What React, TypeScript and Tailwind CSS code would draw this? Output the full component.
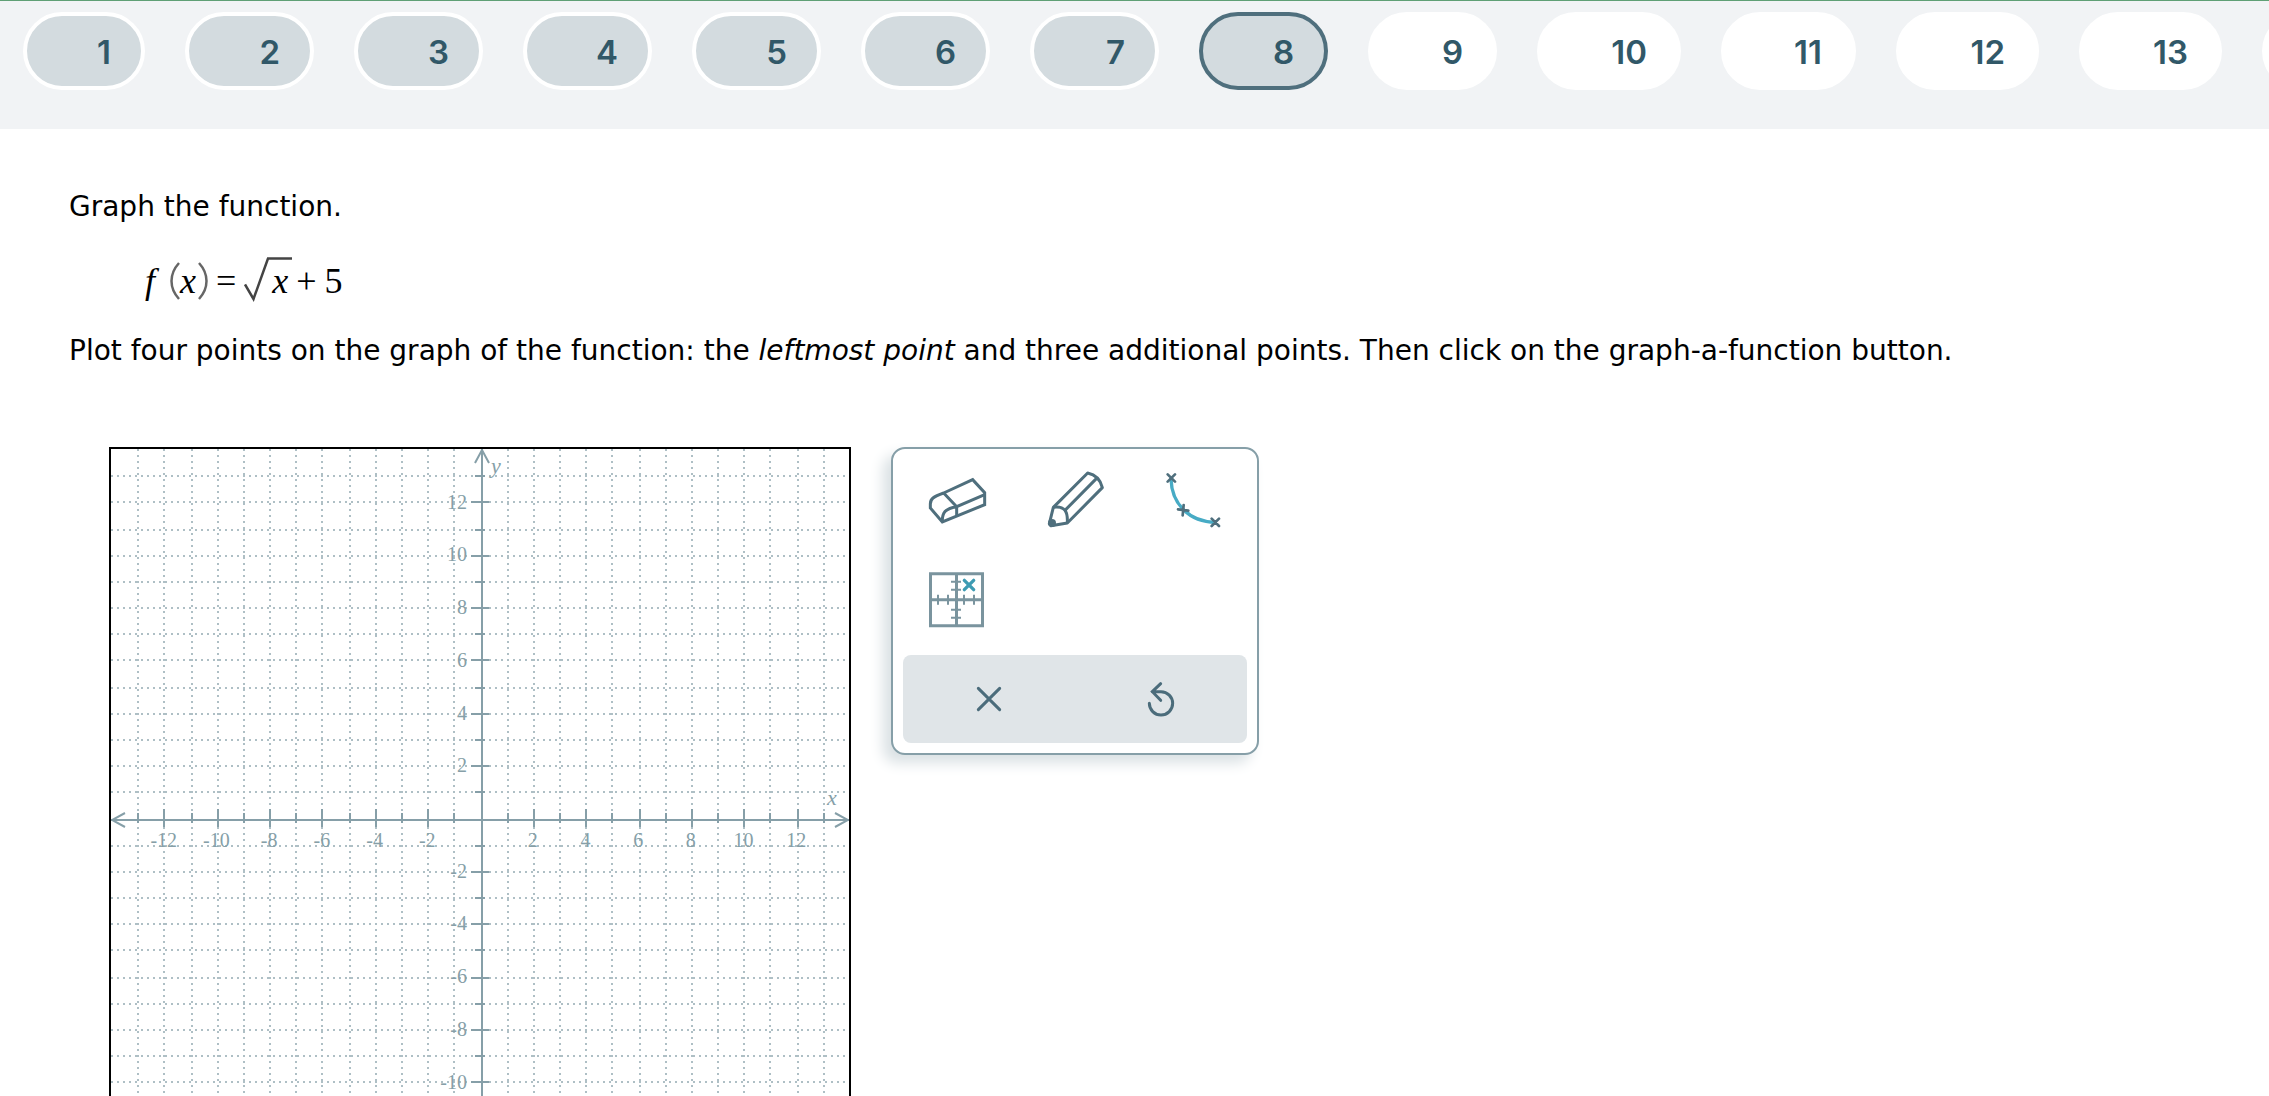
import clsx from "clsx"

const questions = [
    { label: "1", width: "w-[122px]" },
    { label: "2", width: "w-[129px]" },
    { label: "3", width: "w-[129px]" },
    { label: "4", width: "w-[129px]" },
    { label: "5", width: "w-[129px]" },
    { label: "6", width: "w-[129px]" },
    { label: "7", width: "w-[129px]" },
    { label: "8", width: "w-[129px]" },
    { label: "9", width: "w-[129px]" },
    { label: "10", width: "w-[144px]" },
    { label: "11", width: "w-[135px]" },
    { label: "12", width: "w-[143px]" },
    { label: "13", width: "w-[143px]" },
]

const CURRENT = 8
const GRID_SIZE = 369
const UNITS = 14

const place = (unit: number) => ((unit + UNITS) * GRID_SIZE) / (UNITS * 2)
// grid lines sit on whole pixels
const toPx = (unit: number) => Math.round(place(unit))

const lines = Array.from({ length: UNITS * 2 - 1 }, (_, i) => i - UNITS + 1).filter((n) => n !== 0)
const labels = lines.filter((n) => n % 2 === 0)

function QuestionNav() {
    return (
        <nav className="border-t border-[#5f9f75] bg-[#f1f3f5] overflow-hidden pt-[11px] pb-[39px] pl-[23px]">
            <ol className="flex gap-10">
                {questions.map((q) => {
                    const n = Number(q.label)
                    return (
                        <li key={q.label} className="shrink-0">
                            <button
                                type="button"
                                aria-current={n === CURRENT ? "step" : undefined}
                                className={clsx(
                                    "flex h-[78px] items-center justify-end rounded-full border-4 pt-[2px] pr-[30px] font-['Inter',sans-serif] text-[33px] leading-10 font-semibold text-[#315868]",
                                    q.width,
                                    n <= CURRENT ? "bg-[#d3dbdf]" : "bg-white",
                                    n === CURRENT ? "border-[#4f6f7d]" : "border-white"
                                )}
                            >
                                {q.label}
                            </button>
                        </li>
                    )
                })}
                <li className="shrink-0">
                    <button type="button" aria-label="More questions" className="block h-[78px] w-[143px] rounded-full bg-white" />
                </li>
            </ol>
        </nav>
    )
}

function Formula() {
    return (
        <div className="mt-[34px] mb-[30px] ml-[76px] flex h-10 items-center font-['Liberation_Serif',serif] text-[36px] leading-10 text-black">
            <i>f</i>
            <svg className="ml-[15px] h-[38px] w-[10px]" viewBox="0 0 10 38" fill="none" stroke="#666" strokeWidth="2.5">
                <path d="M9 1C-1 12 -1 26 9 37" />
            </svg>
            <i>x</i>
            <svg className="ml-[2px] h-[38px] w-[10px]" viewBox="0 0 10 38" fill="none" stroke="#666" strokeWidth="2.5">
                <path d="M1 1C11 12 11 26 1 37" />
            </svg>
            <span className="ml-2">=</span>
            <svg className="ml-2 h-12 w-12" viewBox="0 0 48 48" fill="none" stroke="#444" strokeWidth="2.5">
                <path d="M1 27.5L9.500 42L24 1.500H48" />
            </svg>
            <i className="-ml-[20px]">x</i>
            <span className="ml-2">+</span>
            <span className="ml-2">5</span>
        </div>
    )
}

function Graph() {
    const axis = toPx(0) + 0.5
    return (
        <div className="shrink-0 border-2 border-black">
            <svg
                className="size-[738px]"
                viewBox={`0 0 ${GRID_SIZE} ${GRID_SIZE}`}
                role="img"
                aria-label="Coordinate grid"
                fill="none"
            >
                <g stroke="#aebfc5" strokeDasharray="1 2">
                    {lines.map((n) => {
                        const p = toPx(n) + 0.5
                        return <path key={n} d={`M${p} 0V${GRID_SIZE}M0 ${p}H${GRID_SIZE}`} />
                    })}
                </g>
                <g stroke="#869fa8">
                    <path d={`M${axis} 0V${GRID_SIZE}M0 ${axis}H${GRID_SIZE}`} />
                    {lines.map((n) => {
                        const p = toPx(n) + 0.5
                        return n % 2 === 0 ? (
                            <path key={n} d={`M${p} 180V189M180 ${p}H189`} />
                        ) : (
                            <path key={n} d={`M${p} 182V187M182 ${p}H187`} />
                        )
                    })}
                    <path d="M182 7L185.500 0.500L189 7M7 182L0.500 185.500L7 189M362 182L368.500 185.500L362 189" />
                </g>
                <g fill="#869fa8" className="font-['Liberation_Serif',serif] text-[10px]">
                    {labels.map((n) => (
                        <text key={n} x={place(n)} y="199" textAnchor="middle">
                            {n}
                        </text>
                    ))}
                    {labels.map((n) => (
                        <text key={n} x="178" y={place(-n) + 3.5} textAnchor="end">
                            {n}
                        </text>
                    ))}
                    <text x="190" y="12" className="text-[11px] italic">y</text>
                    <text x="358" y="178" className="text-[11px] italic">x</text>
                </g>
            </svg>
        </div>
    )
}

function EraserIcon() {
    return (
        <svg className="size-[60px]" viewBox="0 0 180 180" fill="none" stroke="#4f6f7d" strokeWidth="9">
            <path d="M50 66L137 26L173 65V101L46 153L10 111V99C10 84 18 77 50 66Z" />
            <path d="M50 66L89 107L173 71M89 107V134M46 153C45 126 54 112 89 107" />
        </svg>
    )
}

function PencilIcon() {
    return (
        <svg className="size-[60px]" viewBox="0 0 180 180" fill="none" stroke="#4f6f7d" strokeWidth="9">
            <path d="M25 109L128 6C152 11 166 24 172 50L67 156L18 164L13 158Z" strokeLinejoin="round" />
            <path d="M25 109C44 106 54 111 60 118C66 126 68 138 67 156M60 118L157 20" />
            <circle cx="21" cy="156" r="12" fill="#4f6f7d" stroke="none" />
        </svg>
    )
}

function CurveIcon() {
    return (
        <svg className="size-[60px]" viewBox="0 0 180 180" fill="none" strokeLinecap="round">
            <path d="M24 24C26 100 80 153 157 154" stroke="#47abc5" strokeWidth="10" />
            <path
                d="M14 10L36 32M36 10L14 32M62 102L59 133M45 115L76 119M146 143L168 165M168 143L146 165"
                stroke="#4f6f7d"
                strokeWidth="8"
            />
        </svg>
    )
}

function PlotIcon() {
    return (
        <svg className="size-[60px]" viewBox="0 0 180 180" fill="none" stroke="#7a949e">
            <path d="M10.500 14H166.500V170H10.500ZM88.500 14V170M10.500 92H166.500" strokeWidth="9" />
            <path
                d="M72 38H102M72 62H102M72 122H102M72 146H102M33 77V107M63 77V107M111 77V107M141 77V107"
                strokeWidth="6"
            />
            <path d="M112 34L140 62M140 34L112 62" stroke="#3d9bb3" strokeWidth="10" strokeLinecap="round" />
        </svg>
    )
}

function ToolPanel() {
    const tool = "flex h-[98px] items-center justify-center"
    const action = "flex items-center justify-center"
    return (
        <div className="w-[368px] shrink-0 rounded-[14px] border-2 border-[#869fa8] bg-white shadow-[-8px_8px_14px_#dae1e4]">
            <div className="grid grid-cols-3 px-[5px] pt-[3px]">
                <button type="button" aria-label="Eraser" className={tool}>
                    <EraserIcon />
                </button>
                <button type="button" aria-label="Pencil" className={tool}>
                    <PencilIcon />
                </button>
                <button type="button" aria-label="Graph a function" className={tool}>
                    <CurveIcon />
                </button>
                <button type="button" aria-label="Plot a point" className={tool}>
                    <PlotIcon />
                </button>
            </div>
            <div className="mx-[10px] mt-[7px] mb-[10px] grid h-[88px] grid-cols-2 rounded-lg bg-[#e0e5e8]">
                <button type="button" aria-label="Clear" className={action}>
                    <svg className="size-10" viewBox="0 0 120 120" fill="none" stroke="#4b6c7b" strokeWidth="9" strokeLinecap="round">
                        <path d="M28 28L92 92M92 28L28 92" />
                    </svg>
                </button>
                <button type="button" aria-label="Undo" className={action}>
                    <svg className="size-10" viewBox="0 0 120 120" fill="none" stroke="#4b6c7b" strokeWidth="9" strokeLinecap="round">
                        <path d="M25 73A35 35 0 1 0 60 38H34M59 14L34 38L59 64" />
                    </svg>
                </button>
            </div>
        </div>
    )
}

export default function App() {
    return (
        <div className="h-screen overflow-hidden bg-white">
            <QuestionNav />
            <main className="px-[69px] pt-[58px] font-['DejaVu_Sans',sans-serif] text-[28px] leading-10 text-black">
                <p>Graph the function.</p>
                <Formula />
                <p>
                    Plot four points on the graph of the function: the <i>leftmost point</i> and three additional
                    points. Then click on the graph-a-function button.
                </p>
                <div className="mt-[76px] ml-10 flex items-start gap-10">
                    <Graph />
                    <ToolPanel />
                </div>
            </main>
        </div>
    )
}
